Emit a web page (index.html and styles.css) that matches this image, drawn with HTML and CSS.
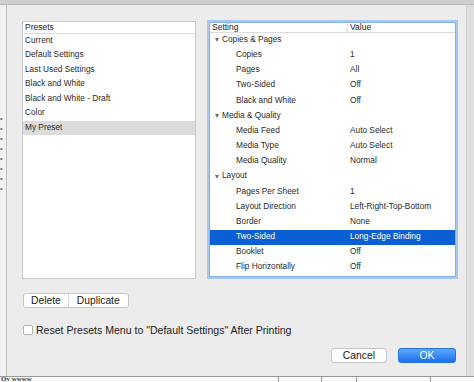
FILE: index.html
```html
<!DOCTYPE html>
<html lang="en">
<head>
    <meta charset="UTF-8">
    <meta name="viewport" content="width=device-width, initial-scale=1.0">
    <title>Presets</title>
    <link rel="stylesheet" href="styles.css">
</head>
<body>
    <div class="toolbar-edge"></div>

    <div class="stage">
        <!-- bits of the document behind the sheet -->
        <div class="doc-left">
            <span>ıııı</span><span>ıııı</span><span>ıııı</span><span>ıııı</span>
            <span>ıııı</span><span>ıııı</span><span>ıııı</span><span>ıııı</span>
        </div>

        <div class="sheet">
            <div class="panes">
                <div class="presets">
                    <div class="presets-head">Presets</div>
                    <ul class="preset-list">
                        <li>Current</li>
                        <li>Default Settings</li>
                        <li>Last Used Settings</li>
                        <li>Black and White</li>
                        <li>Black and White - Draft</li>
                        <li>Color</li>
                        <li class="active">My Preset</li>
                    </ul>
                </div>

                <div class="settings">
                    <div class="settings-head">
                        <div class="col-name">Setting</div>
                        <div class="col-value">Value</div>
                    </div>
                    <div class="row group"><div class="name"><span class="caret"></span>Copies &amp; Pages</div><div class="value"></div></div>
                    <div class="row"><div class="name">Copies</div><div class="value">1</div></div>
                    <div class="row"><div class="name">Pages</div><div class="value">All</div></div>
                    <div class="row"><div class="name">Two-Sided</div><div class="value">Off</div></div>
                    <div class="row"><div class="name">Black and White</div><div class="value">Off</div></div>
                    <div class="row group"><div class="name"><span class="caret"></span>Media &amp; Quality</div><div class="value"></div></div>
                    <div class="row"><div class="name">Media Feed</div><div class="value">Auto Select</div></div>
                    <div class="row"><div class="name">Media Type</div><div class="value">Auto Select</div></div>
                    <div class="row"><div class="name">Media Quality</div><div class="value">Normal</div></div>
                    <div class="row group"><div class="name"><span class="caret"></span>Layout</div><div class="value"></div></div>
                    <div class="row"><div class="name">Pages Per Sheet</div><div class="value">1</div></div>
                    <div class="row"><div class="name">Layout Direction</div><div class="value">Left-Right-Top-Bottom</div></div>
                    <div class="row"><div class="name">Border</div><div class="value">None</div></div>
                    <div class="row selected"><div class="name">Two-Sided</div><div class="value">Long-Edge Binding</div></div>
                    <div class="row"><div class="name">Booklet</div><div class="value">Off</div></div>
                    <div class="row"><div class="name">Flip Horizontally</div><div class="value">Off</div></div>
                </div>
            </div>

            <div class="segmented">
                <button class="seg-btn">Delete</button>
                <button class="seg-btn">Duplicate</button>
            </div>

            <label class="reset">
                <span class="checkbox"></span>
                Reset Presets Menu to "Default Settings" After Printing
            </label>

            <div class="actions">
                <button class="btn">Cancel</button>
                <button class="btn primary">OK</button>
            </div>
        </div>

        <div class="doc-right"></div>
    </div>

    <div class="doc-bottom">
        <span class="doc-word">Ov wwww</span>
        <span class="doc-cell"></span>
        <span class="doc-cell"></span>
        <span class="doc-cell"></span>
        <span class="doc-cell"></span>
    </div>
</body>
</html>
```

FILE: styles.css
```css
body {
    margin: 0;
    font-family: "Liberation Sans", Arial, sans-serif;
    background-color: #f6f6f6;
    width: 474px;
    height: 382px;
    overflow: hidden;
}
.toolbar-edge {
    height: 5px;
    background-color: #cfcfcf;
    border-bottom: 1px solid #b9b9b9;
    box-sizing: border-box;
}
.stage {
    display: flex;
    height: 371px;
}
.doc-left {
    width: 7px;
    background-color: #f1f1f1;
    border-right: 1px solid #bdbdbd;
    box-sizing: border-box;
    display: flex;
    flex-direction: column;
    gap: 6px;
    padding-top: 112px;
    overflow: hidden;
}
.doc-left span {
    font-family: "Liberation Serif", serif;
    font-size: 5px;
    line-height: 4px;
    color: #555;
    letter-spacing: -1px;
}
.doc-right {
    width: 8px;
    background-color: #dedede;
    border-left: 1px solid #cfcfcf;
    box-sizing: border-box;
}
.sheet {
    width: 459px;
    background-color: #ececec;
    padding: 16px 10px 0 15px;
    box-sizing: border-box;
}

/* top panes */
.panes {
    display: flex;
    gap: 13px;
    height: 258px;
}
.presets {
    width: 174px;
    background-color: #fff;
    border: 1px solid #cacaca;
    box-sizing: border-box;
}
.presets-head {
    height: 12px;
    line-height: 11px;
    font-size: 8.5px;
    color: #222;
    padding-left: 2px;
    border-bottom: 1px solid #dcdcdc;
    box-sizing: border-box;
}
.preset-list {
    list-style-type: none;
    margin: 0;
    padding: 0;
}
.preset-list li {
    height: 14.45px;
    line-height: 13px;
    font-size: 8.3px;
    color: #2a2a2a;
    padding-left: 2px;
}
.preset-list li.active {
    background-color: #dcdcdc;
}

.settings {
    width: 247px;
    height: 255px;
    margin-top: 1px;
    background-color: #fff;
    border: 1px solid #86b0e6;
    box-shadow: 0 0 0 2px #a9c8f0;
    box-sizing: border-box;
}
.settings-head {
    display: grid;
    grid-template-columns: 137px 1fr;
    height: 10px;
    line-height: 9px;
    font-size: 8.5px;
    color: #222;
    border-bottom: 1px solid #dcdcdc;
    box-sizing: border-box;
}
.settings-head .col-name {
    padding-left: 2px;
}
.settings-head .col-value {
    border-left: 1px solid #e2e2e2;
    padding-left: 2px;
}
.row {
    display: grid;
    grid-template-columns: 140px 1fr;
    height: 15.17px;
    line-height: 13.5px;
    font-size: 8.3px;
    color: #2a2a2a;
}
.row .name {
    padding-left: 26px;
    white-space: nowrap;
}
.row.group .name {
    padding-left: 5px;
    display: flex;
    align-items: center;
    gap: 3px;
    height: 13.5px;
}
.caret {
    width: 0;
    height: 0;
    border-left: 2.5px solid transparent;
    border-right: 2.5px solid transparent;
    border-top: 4px solid #707070;
    margin-top: 1px;
}
.row.selected {
    background-color: #0b5fd5;
    color: #fff;
}

/* buttons */
.segmented {
    display: inline-flex;
    margin-top: 14px;
    margin-left: 1px;
    height: 15px;
    background-color: #fff;
    border: 1px solid #c6c6c6;
    border-radius: 3px;
    box-sizing: border-box;
}
.seg-btn {
    font-family: "Liberation Sans", Arial, sans-serif;
    font-size: 10.3px;
    color: #222;
    background: none;
    border: 0;
    padding: 0 7px 0 7px;
    line-height: 12px;
}
.seg-btn + .seg-btn {
    border-left: 1px solid #dadada;
    padding: 0 8px 0 8px;
}
.reset {
    display: flex;
    align-items: center;
    gap: 3px;
    margin-top: 16px;
    margin-left: 1px;
    font-size: 10.55px;
    color: #222;
    height: 11px;
}
.checkbox {
    width: 10px;
    height: 10px;
    background-color: #fff;
    border: 1px solid #b3b3b3;
    border-radius: 2px;
    box-sizing: border-box;
}
.actions {
    display: flex;
    justify-content: flex-end;
    gap: 11px;
    margin-top: 13px;
    padding-right: 0;
}
.btn {
    font-family: "Liberation Sans", Arial, sans-serif;
    font-size: 10.4px;
    color: #222;
    background-color: #fff;
    border: 1px solid #c4c4c4;
    border-radius: 3px;
    width: 56px;
    height: 15px;
    padding: 0;
    line-height: 12px;
}
.btn.primary {
    width: 58px;
    color: #fff;
    background: linear-gradient(#5ea8fb, #1a70ee);
    border-color: #2b73dc;
}

/* document underneath */
.doc-bottom {
    height: 6px;
    background-color: #fafafa;
    border-top: 1px solid #9a9a9a;
    box-sizing: border-box;
    display: flex;
    overflow: hidden;
}
.doc-word {
    font-family: "Liberation Serif", serif;
    font-weight: bold;
    font-size: 7px;
    line-height: 5px;
    color: #333;
    width: 285px;
    padding-left: 1px;
}
.doc-cell {
    border-left: 1px solid #999;
    width: 44px;
}
.doc-cell:nth-child(3) {
    width: 35px;
}
.doc-cell:nth-child(4) {
    width: 75px;
}
```
